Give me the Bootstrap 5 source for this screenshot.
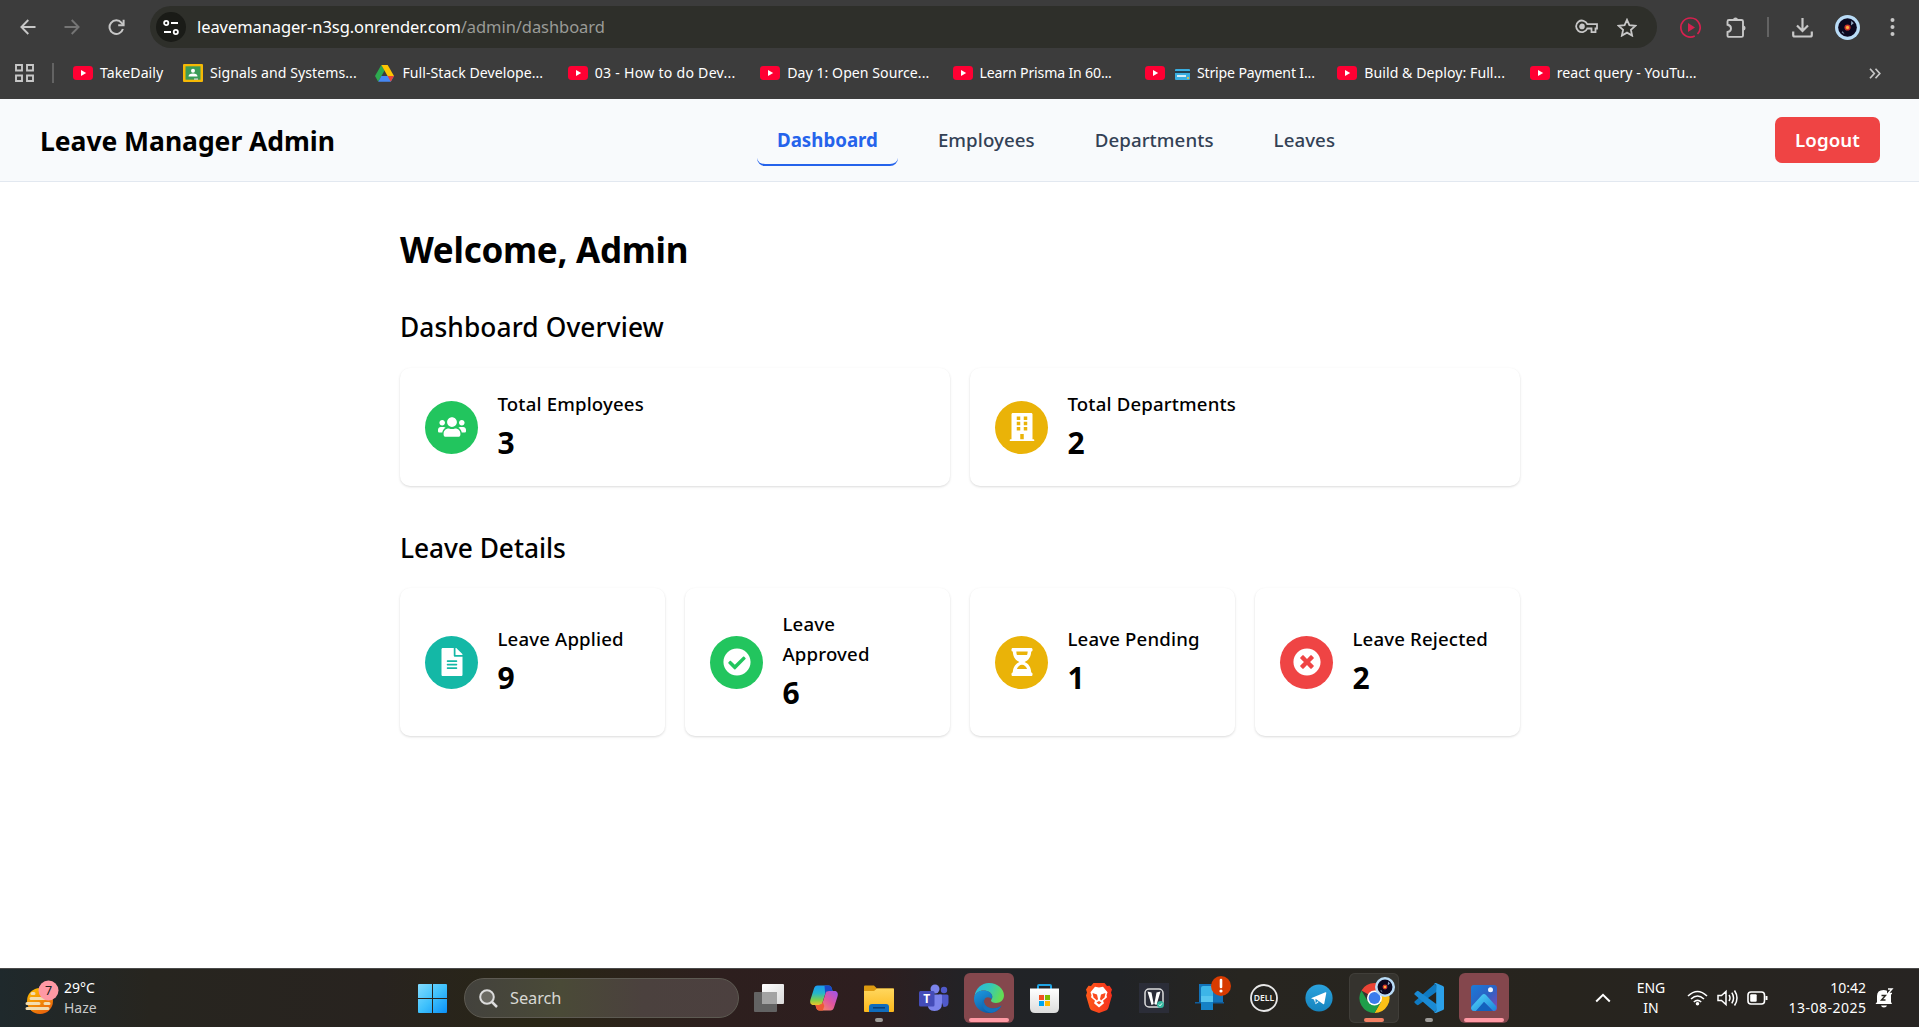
<!DOCTYPE html>
<html lang="en">
<head>
<meta charset="utf-8">
<title>Leave Manager Admin</title>
<meta name="viewport" content="width=device-width, initial-scale=1">
<link href="https://cdn.jsdelivr.net/npm/bootstrap@5.3.0/dist/css/bootstrap.min.css" rel="stylesheet">
<style>
html,body{height:100%}
body{font-family:"Noto Sans","Open Sans",sans-serif;color:#000;background:#fff;overflow:hidden}
svg{display:block;flex:none}
/* browser toolbar */
.chrome-ui{height:99px;background:#3c3c3c;color:#fff}
.tool-row{height:48px;padding:6px 24px 0 20px}
.omni{height:42px;width:1507px;border-radius:21px;background:#2e2f2a;padding:0 20px 0 6px;margin-left:25px}
.site-info{width:30px;height:30px;border-radius:50%;background:#1a1b17}
.url{font-size:16.5px;margin-left:11px;padding-top:1px;letter-spacing:-.07px}
.url-path{color:#9a9b97}
.vline{width:2px;background:#636363;height:20px}
.star{margin-left:18px}
.ext-play{margin-left:23px}
.ext-puzzle{margin-left:25px}
.tool-sep{margin-left:20px}
.dl{margin-left:23px}
.avatar{margin-left:22px}
.dots{margin-left:30px}
.marks-row{height:36px;margin-top:7px;padding-left:15px;font-size:14.1px;line-height:20px}
.marks-sep{margin:0 19px 0 18px}
.bm{width:192.4px;flex:none}
.bm-short{width:110px}
.bm span{margin-left:7px;letter-spacing:.05px}
.bm .tight{letter-spacing:-.16px}
.bm .wide{letter-spacing:.25px}
.card-emoji{margin:3px 0 0 10px}
.more-marks{margin-right:38px}
/* app header */
.app-bar{height:83px;background:#f8fafc;border-bottom:1px solid #e2e8f0;padding:0 39px 0 40px}
.brand{font-size:26.5px;font-weight:700;line-height:40px;padding-top:2px;width:295px;letter-spacing:-.04px}
.tabs{gap:20px;margin:2px 0 0 422px}
.tab-link{padding:0 20px;height:50px;line-height:47px;font-size:18.7px;font-weight:500;color:#334155;text-decoration:none;border-bottom:2px solid transparent;border-radius:8px;letter-spacing:.07px}
.tab-link.on{color:#2563eb;font-weight:700;border-color:#2563eb;letter-spacing:0}
.btn-out,.btn-out:hover{width:105px;height:46px;border-radius:7px;background:#ef4444;color:#fff;font-size:18.7px;font-weight:600;padding:1px 0 0;letter-spacing:.05px}
/* content */
.wrap{width:1120px;margin-left:400px}
.hello{font-size:35px;font-weight:700;line-height:46px;margin:45px 0 36px;letter-spacing:-.28px}
.sect{font-size:26.3px;font-weight:500;line-height:36px;margin:0 0 23px;letter-spacing:.1px}
.tiles+.sect{margin:44px 0 22px;letter-spacing:-.05px}
.tiles{display:grid;gap:20px}
.two{grid-template-columns:1fr 1fr}
.four{grid-template-columns:repeat(4,1fr)}
.stat{border-radius:10px;background:#fff;padding:20px 25px;box-shadow:0 1px 3px rgba(0,0,0,.1),0 1px 2px rgba(0,0,0,.05);gap:19.5px}
.disc{width:53px;height:53px;border-radius:50%;flex:none}
.stat-label{font-size:18.6px;font-weight:500;line-height:30px;letter-spacing:.17px;position:relative;top:1px;white-space:nowrap}
.stat-num{font-size:30px;font-weight:700;line-height:48px;position:relative;top:1px}
.c-green{background:#22c55e}.c-yellow{background:#eab308}.c-teal{background:#14b8a6}.c-red{background:#ef4444}
/* taskbar */
.taskbar{height:59px;color:#fff;border-top:1px solid #4a4a4a;background:linear-gradient(90deg,#1f292c 0,#27251f 150px,#28231f 380px,#292616 540px,#2d1f1e 720px,#2e1e1f 870px,#212327 980px,#212326 1120px,#272520 1240px,#27241e 1560px,#272422 100%)}
.weather{margin-left:24px;width:383px;font-size:14px;line-height:20px}
.weather-text{margin-left:4px}
.haze{color:#c9c9c8}
.search-pill{width:275px;height:40px;border-radius:20px;margin:0 5px 0 7px;border:1px solid #5d5a52;background:linear-gradient(90deg,#43423d,#4a4a37 35%,#4b413e 65%,#4c403f);padding:0 14px;color:#d8d8d4;font-size:16.4px;gap:12px;letter-spacing:-.1px}
.apps{gap:5px}
.app{width:50px;height:50px;border-radius:6px;position:relative;flex:none}
.app.hot{background:#84474d}
.app.soft{background:#35332e;box-shadow:inset 0 0 0 1px #403e39}
.app i{position:absolute;bottom:1px;left:50%;transform:translateX(-50%);height:4px;border-radius:2px;background:#9d9b98;width:8px}
.app.hot i{background:#ff99a4;width:40px}
.app.soft i{background:#f38064;width:20px}
.phone{margin:-10px -8px 0 0}
.chrome-ico{margin:-6px 0 0 5px}
.tray{font-size:14px;line-height:20px;margin-left:86px}
.lang{margin-left:25px;width:30px}
.wifi{margin-left:21px}
.vol{margin-left:9px}
.bat{margin-left:8px}
.clock{margin-left:19px;width:79px}
.date{letter-spacing:.48px;margin-right:-.5px}
.bell{margin-left:9px}
</style>
</head>
<body class="d-flex flex-column">
<svg width="0" height="0" class="position-absolute">
 <defs>
  <symbol id="yt" viewBox="0 0 20 14"><rect width="20" height="14" rx="3.4" fill="#ff0033"/><path d="M8 4l5.2 3L8 10z" fill="#fff"/></symbol>
  <symbol id="vinyl" viewBox="0 0 26 26"><circle cx="13" cy="13" r="13" fill="#b9dcf7"/><circle cx="13" cy="13" r="9.7" fill="#0b0820"/><path d="M17 6l2.5 2.5-3 2.5zM8 17l2 3-3-2z" fill="#8ba2bd"/><circle cx="13" cy="13" r="3.2" fill="#c9302f"/><circle cx="13" cy="13" r="1.7" fill="#ffb13d"/></symbol>
  <linearGradient id="gwin" x1="0" y1="0" x2="1" y2="1"><stop offset="0" stop-color="#83dcff"/><stop offset=".5" stop-color="#3fc1fc"/><stop offset="1" stop-color="#0a90f7"/></linearGradient>
  <linearGradient id="gsun" x1="0" y1="0" x2=".6" y2="1"><stop offset="0" stop-color="#ffc400"/><stop offset="1" stop-color="#e9650c"/></linearGradient>
  <linearGradient id="gtv" x1="0" y1="0" x2="1" y2="1"><stop offset="0" stop-color="#fff"/><stop offset="1" stop-color="#d9d9d9"/></linearGradient>
  <linearGradient id="gcp1" x1="0" y1="0" x2="0" y2="1"><stop offset="0" stop-color="#1b9af2"/><stop offset=".4" stop-color="#25b6cb"/><stop offset=".75" stop-color="#7fcf4a"/><stop offset="1" stop-color="#f0c52b"/></linearGradient>
  <linearGradient id="gcp2" x1="1" y1="0" x2="0" y2="1"><stop offset="0" stop-color="#9a55f0"/><stop offset=".45" stop-color="#e0559f"/><stop offset="1" stop-color="#ff9a55"/></linearGradient>
  <linearGradient id="gfold" x1="0" y1="0" x2="0" y2="1"><stop offset="0" stop-color="#ffd75e"/><stop offset="1" stop-color="#fcb81b"/></linearGradient>
  <linearGradient id="gedge1" x1="0" y1="0" x2="1" y2=".3"><stop offset="0" stop-color="#27b5e6"/><stop offset=".55" stop-color="#35c8b8"/><stop offset="1" stop-color="#62dc56"/></linearGradient>
  <linearGradient id="gedge2" x1="0" y1="0" x2=".6" y2="1"><stop offset="0" stop-color="#1c9ae0"/><stop offset="1" stop-color="#0c59a4"/></linearGradient>
  <linearGradient id="gstore" x1="0" y1="0" x2="0" y2="1"><stop offset="0" stop-color="#fff"/><stop offset="1" stop-color="#dcdcdc"/></linearGradient>
  <linearGradient id="gtg" x1="0" y1="0" x2="0" y2="1"><stop offset="0" stop-color="#2ba3de"/><stop offset="1" stop-color="#1583bd"/></linearGradient>
  <linearGradient id="gph" x1="0" y1="0" x2="1" y2="1"><stop offset="0" stop-color="#1a7bd8"/><stop offset=".5" stop-color="#2b62c4"/><stop offset="1" stop-color="#8247b5"/></linearGradient>
  <linearGradient id="gph2" x1="0" y1="0" x2="1" y2="1"><stop offset="0" stop-color="#55d8f8"/><stop offset="1" stop-color="#1a84dc"/></linearGradient>
  <linearGradient id="gbr" x1="0" y1="0" x2="1" y2="0"><stop offset="0" stop-color="#ff5a1a"/><stop offset="1" stop-color="#f5301c"/></linearGradient>
 </defs>
</svg>

<div class="chrome-ui flex-shrink-0">
 <div class="tool-row d-flex align-items-center">
  <svg width="16" height="16" viewBox="0 0 16 16" fill="none" stroke="#c7c7c7" stroke-width="1.9"><path d="M15.5 8H1.5M8.300 1L1.400 8l6.900 7"/></svg>
  <svg class="ms-auto" width="16" height="16" viewBox="0 0 16 16" fill="none" stroke="#757575" stroke-width="1.9"><path d="M.5 8h14M7.700 1l6.900 7-6.900 7"/></svg>
  <svg class="ms-auto" width="17" height="17" viewBox="0 0 17 17" fill="none" stroke="#c7c7c7" stroke-width="2"><path d="M14.900 10a6.800 6.800 0 1 1-1.300-6.200l2 2.200"/><path d="M15.600.8v5.400h-5.400"/></svg>
  <div class="omni d-flex align-items-center flex-shrink-0">
   <div class="site-info d-flex align-items-center justify-content-center">
    <svg width="16" height="15" viewBox="0 0 16 15" fill="none" stroke="#fff" stroke-width="1.8"><circle cx="3.200" cy="3" r="2.100"/><path d="M8 3h7M1 12h7"/><circle cx="12.800" cy="12" r="2.100"/></svg>
   </div>
   <div class="url text-nowrap">leavemanager-n3sg.onrender.com<span class="url-path">/admin/dashboard</span></div>
   <svg class="ms-auto" width="24" height="16" viewBox="0 0 24 16" fill="none" stroke="#c7c7c7" stroke-width="1.8"><path d="M12.300 5.200H22v4.300h-1.500v3.600h-4V9.500h-4.200A5.800 5.800 0 1 1 12.300 5.200z"/><circle cx="7" cy="7.400" r="1.900" fill="#c7c7c7"/></svg>
   <svg class="star" width="20" height="19" viewBox="0 0 20 19" fill="none" stroke="#c7c7c7" stroke-width="1.8"><path d="M10 1.800l2.400 5.400 5.900.6-4.400 4 1.200 5.800-5.100-3-5.100 3 1.200-5.800-4.400-4 5.900-.6z"/></svg>
  </div>
  <svg class="ext-play" width="21" height="21" viewBox="0 0 21 21" fill="none" stroke="#d6214f" stroke-width="1.7"><path d="M17.500 17A9.500 9.500 0 0 0 10.500 1a9.500 9.500 0 1 0 4.300 17.900"/><path d="M8 6l7 4.500L8 15z" fill="#d6214f" stroke="none"/></svg>
  <svg class="ext-puzzle" width="21" height="21" viewBox="0 0 21 21" fill="none" stroke="#c7c7c7" stroke-width="1.9"><path d="M3 3h12.500Q17 3 17 4.500v13.900q0 1.500-1.500 1.500H3q-1.500 0-1.500-1.500V15q3.500-.7 3.500-3.600T1.500 7.800V4.500Q1.500 3 3 3z"/><path d="M7 3a2.500 2.500 0 0 1 5 0zM17 8.500a2.500 2.500 0 0 1 0 5z" fill="#c7c7c7" stroke="none"/></svg>
  <div class="vline tool-sep"></div>
  <svg class="dl" width="21" height="21" viewBox="0 0 21 21" fill="none" stroke="#c7c7c7" stroke-width="2.2"><path d="M10.500 1v12.500M5 8.500l5.500 5.500L16 8.500M1.200 14.500V18q0 1.500 1.500 1.500h15.600q1.500 0 1.500-1.500v-3.500"/></svg>
  <svg class="avatar" width="25" height="25"><use href="#vinyl"/></svg>
  <svg class="dots" width="5" height="18" viewBox="0 0 5 18" fill="#c7c7c7"><circle cx="2.500" cy="2" r="2"/><circle cx="2.500" cy="9" r="2"/><circle cx="2.500" cy="16" r="2"/></svg>
 </div>
 <div class="marks-row d-flex align-items-center text-nowrap">
  <svg width="19" height="18" viewBox="0 0 19 18" fill="none" stroke="#c7c7c7" stroke-width="1.9"><path d="M1 1h6v5.500H1zM12 1h6v5.500h-6zM1 11.500h6V17H1zM12 11.500h6V17h-6z"/></svg>
  <div class="vline marks-sep"></div>
  <div class="bm bm-short d-flex align-items-center"><svg width="20" height="14"><use href="#yt"/></svg><span>TakeDaily</span></div>
  <div class="bm d-flex align-items-center"><svg width="20" height="18" viewBox="0 0 20 18"><rect width="20" height="18" rx="1" fill="#f6b905"/><rect x="2.500" y="2.300" width="15" height="13.400" fill="#3c9c57"/><circle cx="10" cy="6.700" r="2" fill="#fff"/><path d="M5.500 12.600q0-3 4.500-3t4.500 3z" fill="#fff"/><path d="M11 15.700h4v-1.200h-4z" fill="#ddd"/></svg><span>Signals and Systems...</span></div>
  <div class="bm d-flex align-items-center"><svg width="19" height="17" viewBox="0 0 19 17"><path d="M6.300 0L0 11l3.200 5.700L9.500 5.600z" fill="#2da94f"/><path d="M6.300 0h6.400L19 11h-6.400z" fill="#fec502"/><path d="M3.200 16.700L6.400 11H19l-3.200 5.700z" fill="#4688f4"/><path d="M12.600 11H19l-3.200 5.700z" fill="#ea4436"/></svg><span class="ms-2">Full-Stack Develope...</span></div>
  <div class="bm d-flex align-items-center"><svg width="20" height="14"><use href="#yt"/></svg><span class="wide">03 - How to do Dev...</span></div>
  <div class="bm d-flex align-items-center"><svg width="20" height="14"><use href="#yt"/></svg><span>Day 1: Open Source...</span></div>
  <div class="bm d-flex align-items-center"><svg width="20" height="14"><use href="#yt"/></svg><span class="tight">Learn Prisma In 60...</span></div>
  <div class="bm d-flex align-items-center"><svg width="20" height="14"><use href="#yt"/></svg><svg class="card-emoji" width="15" height="11" viewBox="0 0 15 11"><rect width="15" height="11" rx="1" fill="#39aee0"/><path d="M0 2h15v2H0z" fill="#23404f"/><path d="M2 6h9v2H2z" fill="#d5eef8"/><circle cx="13" cy="9" r="1" fill="#f5c63c"/></svg><span class="tight">Stripe Payment I...</span></div>
  <div class="bm d-flex align-items-center"><svg width="20" height="14"><use href="#yt"/></svg><span>Build &amp; Deploy: Full...</span></div>
  <div class="bm d-flex align-items-center"><svg width="20" height="14"><use href="#yt"/></svg><span>react query - YouTu...</span></div>
  <svg class="ms-auto more-marks" width="12" height="11" viewBox="0 0 12 11" fill="none" stroke="#c7c7c7" stroke-width="1.7"><path d="M1 .8l4.300 4.700L1 10.200M6.500.8l4.300 4.700-4.300 4.700"/></svg>
 </div>
</div>

<header class="app-bar d-flex align-items-center flex-shrink-0 text-nowrap">
 <div class="brand">Leave Manager Admin</div>
 <nav class="tabs d-flex">
  <a class="tab-link on" href="#">Dashboard</a>
  <a class="tab-link" href="#">Employees</a>
  <a class="tab-link" href="#">Departments</a>
  <a class="tab-link" href="#">Leaves</a>
 </nav>
 <button class="btn btn-out ms-auto">Logout</button>
</header>

<main class="flex-grow-1">
 <div class="wrap">
  <h1 class="hello">Welcome, Admin</h1>
  <h2 class="sect">Dashboard Overview</h2>
  <div class="tiles two">
   <div class="stat d-flex align-items-center"><div class="disc c-green d-flex align-items-center justify-content-center"><svg width="28" height="28" viewBox="0 0 640 512" fill="#fff"><path d="M96 224c35.300 0 64-28.700 64-64s-28.700-64-64-64-64 28.700-64 64 28.700 64 64 64zm448 0c35.300 0 64-28.700 64-64s-28.700-64-64-64-64 28.700-64 64 28.700 64 64 64zm32 32h-64c-17.600 0-33.500 7.100-45.100 18.600 40.300 22.100 68.900 62 75.100 109.400h66c17.700 0 32-14.300 32-32v-32c0-35.300-28.700-64-64-64zm-256 0c61.900 0 112-50.100 112-112S381.900 32 320 32 208 82.100 208 144s50.100 112 112 112zm76.800 32h-8.300c-20.800 10-43.900 16-68.500 16s-47.600-6-68.500-16h-8.300C179.600 288 128 339.600 128 403.200V432c0 26.500 21.500 48 48 48h288c26.500 0 48-21.500 48-48v-28.800c0-63.600-51.600-115.200-115.200-115.200zm-223.700-13.400C161.500 263.100 145.600 256 128 256H64c-35.300 0-64 28.700-64 64v32c0 17.700 14.300 32 32 32h65.900c6.300-47.400 34.900-87.300 75.200-109.400z"/></svg></div><div><div class="stat-label">Total Employees</div><div class="stat-num">3</div></div></div>
   <div class="stat d-flex align-items-center"><div class="disc c-yellow d-flex align-items-center justify-content-center"><svg width="28" height="28" viewBox="0 0 448 512" fill="#fff" fill-rule="evenodd"><path d="M436 480h-20V24c0-13.300-10.700-24-24-24H56C42.700 0 32 10.700 32 24v456H12c-6.600 0-12 5.400-12 12v20h448v-20c0-6.600-5.400-12-12-12zM128 64h64v64h-64zM256 64h64v64h-64zM128 160h64v64h-64zM256 160h64v64h-64zM128 256h64v64h-64zM256 256h64v64h-64zM192 384h64v96h-64z"/></svg></div><div><div class="stat-label">Total Departments</div><div class="stat-num">2</div></div></div>
  </div>
  <h2 class="sect">Leave Details</h2>
  <div class="tiles four">
   <div class="stat d-flex align-items-center"><div class="disc c-teal d-flex align-items-center justify-content-center"><svg width="28" height="28" viewBox="0 0 384 512" fill="#fff"><path d="M224 136V0H24C10.700 0 0 10.700 0 24v464c0 13.300 10.700 24 24 24h336c13.300 0 24-10.700 24-24V160H248c-13.200 0-24-10.800-24-24zm64 236c0 6.600-5.400 12-12 12H108c-6.600 0-12-5.400-12-12v-8c0-6.600 5.400-12 12-12h168c6.600 0 12 5.400 12 12v8zm0-64c0 6.600-5.400 12-12 12H108c-6.600 0-12-5.400-12-12v-8c0-6.600 5.400-12 12-12h168c6.600 0 12 5.400 12 12v8zm0-72v8c0 6.600-5.400 12-12 12H108c-6.600 0-12-5.400-12-12v-8c0-6.600 5.400-12 12-12h168c6.600 0 12 5.400 12 12zm96-114.100v6.100H256V0h6.100c6.400 0 12.500 2.500 17 7l97.900 98c4.500 4.500 7 10.600 7 16.900z"/></svg></div><div><div class="stat-label">Leave Applied</div><div class="stat-num">9</div></div></div>
   <div class="stat d-flex align-items-center"><div class="disc c-green d-flex align-items-center justify-content-center"><svg width="28" height="28" viewBox="0 0 512 512" fill="#fff" fill-rule="evenodd"><path d="M504 256c0 137-111 248-248 248S8 393 8 256 119 8 256 8s248 111 248 248zM227.300 387.300l184-184c6.200-6.200 6.200-16.400 0-22.600l-22.600-22.600c-6.200-6.200-16.400-6.200-22.600 0L216 308.100l-70.100-70.100c-6.200-6.200-16.400-6.200-22.600 0l-22.600 22.600c-6.200 6.200-6.200 16.400 0 22.600l104 104c6.200 6.200 16.400 6.200 22.600 0z"/></svg></div><div><div class="stat-label">Leave<br>Approved</div><div class="stat-num">6</div></div></div>
   <div class="stat d-flex align-items-center"><div class="disc c-yellow d-flex align-items-center justify-content-center"><svg width="28" height="28" viewBox="0 0 384 512" fill="#fff"><path d="M360 0H24C10.700 0 0 10.700 0 24v16c0 13.300 10.700 24 24 24 0 91 51 167.700 120.800 192C75 280.300 24 357 24 448c-13.300 0-24 10.700-24 24v16c0 13.300 10.700 24 24 24h336c13.300 0 24-10.700 24-24v-16c0-13.300-10.700-24-24-24 0-91-51-167.700-120.800-192C309 231.700 360 155 360 64c13.300 0 24-10.700 24-24V24c0-13.300-10.700-24-24-24zm-75.100 384H99.100c17-46.800 52.100-80 92.900-80 40.800 0 75.900 33.200 92.900 80zm0-256H99.100C92 108.500 88 86.700 88 64h208c0 22.800-4 44.600-11.100 64z"/></svg></div><div><div class="stat-label">Leave Pending</div><div class="stat-num">1</div></div></div>
   <div class="stat d-flex align-items-center"><div class="disc c-red d-flex align-items-center justify-content-center"><svg width="28" height="28" viewBox="0 0 512 512" fill="#fff"><path d="M256 8C119 8 8 119 8 256s111 248 248 248 248-111 248-248S393 8 256 8zm121.600 313.100c4.700 4.700 4.700 12.300 0 17L338 377.600c-4.700 4.700-12.300 4.700-17 0L256 312l-65.100 65.600c-4.700 4.700-12.300 4.700-17 0L134.400 338c-4.700-4.700-4.700-12.300 0-17l65.600-65-65.600-65.100c-4.700-4.700-4.700-12.300 0-17l39.600-39.600c4.700-4.700 12.300-4.700 17 0l65 65.700 65.100-65.600c4.700-4.700 12.300-4.700 17 0l39.600 39.600c4.700 4.700 4.700 12.300 0 17L312 256l65.600 65.100z"/></svg></div><div><div class="stat-label">Leave Rejected</div><div class="stat-num">2</div></div></div>
  </div>
 </div>
</main>

<footer class="taskbar d-flex align-items-center flex-shrink-0 text-nowrap">
 <div class="weather d-flex align-items-center">
  <svg width="36" height="36" viewBox="0 0 36 36"><circle cx="16" cy="21" r="13" fill="url(#gsun)"/><g stroke="#f3ddb0" stroke-width="3" stroke-linecap="round"><path d="M8 13.500h2M7 18.500h18M3 23.500h12M21 23.500h4M3 28.500h21"/></g><circle cx="24.500" cy="10.500" r="10" fill="#ff99a4"/><text x="24.500" y="15" font-size="12.500" text-anchor="middle" fill="#222">7</text></svg>
  <div class="weather-text"><div>29°C</div><div class="haze">Haze</div></div>
 </div>
 <div class="app d-flex align-items-center justify-content-center"><svg width="29" height="29" viewBox="0 0 29 29" fill="url(#gwin)"><path d="M1 0h13v14H0V1q0-1 1-1zM15 0h13q1 0 1 1v13H15zM0 15h14v14H1q-1 0-1-1zM15 15h14v13q0 1-1 1H15z"/></svg></div>
 <div class="search-pill d-flex align-items-center"><svg width="19" height="19" viewBox="0 0 19 19" fill="none" stroke="#dcdcdc" stroke-width="2"><circle cx="8" cy="8" r="6.800" fill="#6b6a63"/><path d="M13 13l5 5" stroke-width="2.500"/></svg><span>Search</span></div>
 <div class="apps d-flex">
  <div class="app d-flex align-items-center justify-content-center"><svg width="30" height="28" viewBox="0 0 30 28"><rect x="8" width="22" height="20" rx="1" fill="url(#gtv)"/><rect y="8" width="23" height="20" rx="1" fill="#636363"/><rect x="8" y="8" width="15" height="12" fill="#a3a3a3"/></svg></div>
  <div class="app d-flex align-items-center justify-content-center"><svg width="30" height="28" viewBox="0 0 30 28"><path d="M8.500 1.500h11c2 0 2.800 1.200 3.300 3l.8 2.500h-3.800c-2 0-3 1-3.600 3l-2.700 8.500c-.6 1.800-1.600 2.500-3.500 2.500H4.500C1.500 21 .6 18.500 1.500 15.500L5 4.500c.6-2 1.700-3 3.500-3z" fill="url(#gcp1)"/><path d="M15.500 1.500h4c2 0 2.800 1.200 3.300 3l.8 2.500h-3.800c-2 0-3 1-3.600 3z" fill="#1a48c8"/><path d="M21.500 26.500h-11c-2 0-2.800-1.200-3.300-3L6.400 21h3.800c2 0 3-1 3.600-3l2.700-8.500c.6-1.800 1.600-2.500 3.500-2.500h5.500c3 0 3.900 2.500 3 5.500l-3.500 11c-.6 2-1.700 3-3.500 3z" fill="url(#gcp2)"/><path d="M10.500 26.500c-2 0-2.800-1.200-3.300-3L6.400 21h3.800c2 0 3-1 3.600-3l1.500 4-1.500 4.500z" fill="#ee5a35"/></svg></div>
  <div class="app d-flex align-items-center justify-content-center"><svg width="30" height="27" viewBox="0 0 30 27"><path d="M0 1.500Q0 .5 1 .5h9l3 3H30V15H0z" fill="#dd9a10"/><path d="M0 6h10l3-2.500h16q1 0 1 1V26q0 1-1 1H1q-1 0-1-1z" fill="url(#gfold)"/><path d="M5 27v-5q0-3 3-3h14q3 0 3 3v5z" fill="#0f6cbd"/><path d="M9 22.800h12" stroke="#0a3f73" stroke-width="1.500"/></svg><i></i></div>
  <div class="app d-flex align-items-center justify-content-center"><svg width="30" height="28" viewBox="0 0 30 28"><circle cx="25" cy="6" r="3.200" fill="#5059c9"/><path d="M20 10.500h8q1.500 0 1.500 1.500v6.500q0 4.500-5 4.500z" fill="#5059c9"/><circle cx="16" cy="5" r="4.500" fill="#7b83eb"/><path d="M9 10.500h13q1 0 1 1V19q0 8-7.500 8T9 19z" fill="#7b83eb"/><rect y="7" width="15.500" height="15.500" rx="1.500" fill="#444cb8"/><text x="7.700" y="19" font-size="12" font-weight="700" text-anchor="middle" fill="#fff">T</text></svg></div>
  <div class="app hot d-flex align-items-center justify-content-center"><svg width="30" height="30" viewBox="0 0 30 30"><path d="M.5 13.500C1.500 5.500 7.500 0 15 0c8.500 0 15 6 15 12.500 0 4.500-3.500 7.500-8 7.500-3 0-5-1-5-2.500 0-.8 1.300-1.500 1.300-3.800C18.300 10 14 7.500 9.500 7.500 5 7.500 2 10 .5 13.500z" fill="url(#gedge1)"/><path d="M0 16C0 10.500 5 7.500 9.500 7.500c4.800 0 8.800 2.700 8.800 6.200 0 1-.3 1.800-.8 2.400-1.300-1.800-4-2.600-6-1-4 3.500 0 10.400 7 10.400 3.500 0 6.500-1.200 9-3C25 27.500 20.500 30 15 30 6.500 30 0 23.500 0 16z" fill="url(#gedge2)"/><path d="M11.500 15.100c-4 3.500 0 10.400 7 10.400 3.500 0 6.500-1.200 9-3C25.500 26.500 22 29 17.500 29.800 8 29 5.500 18 11.500 15.100z" fill="#1471bd"/></svg><i></i></div>
  <div class="app d-flex align-items-center justify-content-center"><svg width="29" height="29" viewBox="0 0 29 29"><path d="M8 8V2q0-1 1-1h11q1 0 1 1v6" fill="none" stroke="#1fa3e3" stroke-width="2"/><path d="M0 4.500h29V24q0 5-5 5H5q-5 0-5-5z" fill="url(#gstore)"/><path d="M9 11h5v5H9z" fill="#f25022"/><path d="M15 11h5v5h-5z" fill="#7fba00"/><path d="M9 17h5v5H9z" fill="#00a4ef"/><path d="M15 17h5v5h-5z" fill="#ffb900"/></svg></div>
  <div class="app d-flex align-items-center justify-content-center"><svg width="26" height="30" viewBox="0 0 26 30"><path d="M7.500 0h11l2.500 3 2.500-.3L26 6.500l-1 3 1 3-3.500 12q-.7 2-2 2.800L13 30l-7.500-2.700q-1.300-.8-2-2.800L0 12.500l1-3-1-3L2.500 2.700 5 3z" fill="url(#gbr)"/><path d="M13 4.500l4-.8 4.500 5.500-1 3 .5 2-4 3.500 1 2.500L13 24.500 8 20.200l1-2.500-4-3.500.5-2-1-3L9 3.700z" fill="#fff"/><path d="M6.500 10l4.500 1.500 1 4.500-1 1.500-3.500-3zM19.500 10L15 11.500 14 16l1 1.500 3.500-3zM10.500 19.500L13 18l2.500 1.500L13 21.500z" fill="#fb4a1d"/></svg></div>
  <div class="app d-flex align-items-center justify-content-center"><svg width="30" height="30" viewBox="0 0 30 30"><path fill="#2b2d38" d="M0 0h30v30H0z"/><rect x="6" y="6" width="18" height="18" rx="4" fill="none" stroke="#ddd" stroke-width="1.500"/><path d="M8.500 8.500l4 1L14.700 21 12.500 22zM21.500 8.500l-4 1L15.300 21l2.200 1z" fill="#fff"/><circle cx="21.500" cy="21.500" r="3.500" fill="#35b7a0"/><path d="M19.800 21.500l1.200 1.300 2-2.400" fill="none" stroke="#fff"/></svg></div>
  <div class="app d-flex align-items-center justify-content-center"><svg class="phone" width="38" height="36" viewBox="0 0 38 36"><path d="M5 9h24v18H5z" fill="#1272b8"/><path d="M1 27h29v1.500H1z" fill="#0f5d9d"/><path d="M7 13q0-2 2-2h11q-1 0-1 2v22H7z" fill="#3cb5e8"/><path d="M7 27h12v8H7z" fill="#1581c6"/><path d="M7 21h12v6H7z" fill="#56c5ef"/><circle cx="27" cy="11" r="10" fill="#d83b01"/><path d="M27 5v7" stroke="#fff" stroke-width="2.600" stroke-linecap="round"/><circle cx="27" cy="16" r="1.600" fill="#fff"/></svg></div>
  <div class="app d-flex align-items-center justify-content-center"><svg width="28" height="28" viewBox="0 0 28 28"><circle cx="14" cy="14" r="13" fill="#24231f" stroke="#e8e8e8" stroke-width="1.800"/><text x="14" y="17.300" font-size="9" font-weight="600" text-anchor="middle" fill="#f2f2f2" textLength="20.500" lengthAdjust="spacingAndGlyphs">DELL</text></svg></div>
  <div class="app d-flex align-items-center justify-content-center"><svg width="28" height="28" viewBox="0 0 28 28"><circle cx="14" cy="14" r="13.600" fill="url(#gtg)"/><path d="M6 14.300l14.500-6q1-.3.800.8l-2 10.500q-.3 1-1.300.5l-7.500-5.400v4.800l2.200-2.200 1 .8-3.200 2.200-1.500-4.700z" fill="#fff"/></svg></div>
  <div class="app soft d-flex align-items-center justify-content-center"><svg class="chrome-ico" width="36" height="36" viewBox="0 0 36 36"><path d="M15.500 21L2.500 13.500a15 15 0 0 1 26 0z" fill="#ea4335"/><path d="M28.500 13.500a15 15 0 0 1-13 22.500L22 24.700 15.500 13.500z" fill="#fbc016"/><path d="M2.500 13.500a15 15 0 0 0 13 22.500L22 24.700 9 24.700z" fill="#1e9e4a"/><circle cx="15.500" cy="21" r="7.500" fill="#fff"/><circle cx="15.500" cy="21" r="5.900" fill="#3a7cec"/><svg x="16" y="0" width="20" height="20"><use href="#vinyl"/></svg></svg><i></i></div>
  <div class="app d-flex align-items-center justify-content-center"><svg width="30" height="30" viewBox="0 0 30 30"><path d="M21.500.3L.8 18.200q-.9.900 0 1.700l2 1.900q.9.700 1.900 0L23 8.500z" fill="#0f7ac2"/><path d="M21.500 29.700L.8 11.800q-.9-.9 0-1.700l2-1.900q.9-.7 1.900 0L23 21.500z" fill="#1a8ad4"/><path d="M22 0l7 3q1 .5 1 1.500v21q0 1-1 1.500l-7 3q-1 .2-2-.7 1.800.3 2.200-1.300V2Q21.800.4 20 .7q1-.9 2-.7z" fill="#2ba1ea"/></svg><i></i></div>
  <div class="app hot d-flex align-items-center justify-content-center"><svg width="26" height="26" viewBox="0 0 26 26"><rect width="26" height="26" rx="3" fill="url(#gph)"/><path d="M1 21L11 10q2-2 4 0l10 11q1 1.500 0 3.500-1 1.500-2.500 1.500L13 17 5 26H3q-2 0-2.800-2-.4-2 .8-3z" fill="url(#gph2)"/><path d="M5 26l8-9 9 9z" fill="#1261bd"/><circle cx="19.500" cy="4.800" r="2.500" fill="#eaf3ff"/></svg><i></i></div>
 </div>
 <div class="tray d-flex align-items-center">
  <svg width="16" height="10" viewBox="0 0 16 10" fill="none" stroke="#fff" stroke-width="2"><path d="M1.200 8.500L8 1.800l6.800 6.700"/></svg>
  <div class="lang text-center"><div>ENG</div><div>IN</div></div>
  <svg class="wifi" width="21" height="16" viewBox="0 0 21 16" fill="none" stroke="#fff" stroke-width="1.600"><path d="M1 6q9.500-9 19 0M4 9q6.500-6 13 0M6.800 12q3.700-3.300 7.400 0"/><circle cx="10.500" cy="13.800" r="1.800" fill="#fff" stroke="none"/></svg>
  <svg class="vol" width="22" height="18" viewBox="0 0 22 18" fill="none" stroke="#fff" stroke-width="1.500"><path d="M1 6.500h3.500L9 2.500v13l-4.500-4H1zM12 6q2 3 0 6M14.800 3.700q3.500 5.300 0 10.600M17.500 1.500q5 7.500 0 15"/></svg>
  <svg class="bat" width="21" height="14" viewBox="0 0 21 14" fill="none" stroke="#fff" stroke-width="1.600"><rect x="1" y="1" width="16.500" height="12" rx="3"/><rect x="3.200" y="3.200" width="6.500" height="7.600" rx="1" fill="#fff" stroke="none"/><path d="M19.500 5v4" stroke-width="2"/></svg>
  <div class="clock text-end"><div>10:42</div><div class="date">13-08-2025</div></div>
  <svg class="bell" width="19" height="20" viewBox="0 0 19 20"><path d="M2 14V8q0-6 6.500-6 2 0 3.500.8V6h4v8l1 2H.5zM6 17.500h6q-.5 2-3 2t-3-2z" fill="#fff"/><path d="M6.500 7.500h4l-4 4.500h4" fill="none" stroke="#27241e" stroke-width="1.400"/><path d="M13 1h4l-4 4.500h4" fill="none" stroke="#fff" stroke-width="1.400"/></svg>
 </div>
</footer>
<script src="https://cdn.jsdelivr.net/npm/bootstrap@5.3.0/dist/js/bootstrap.bundle.min.js"></script>
</body>
</html>
